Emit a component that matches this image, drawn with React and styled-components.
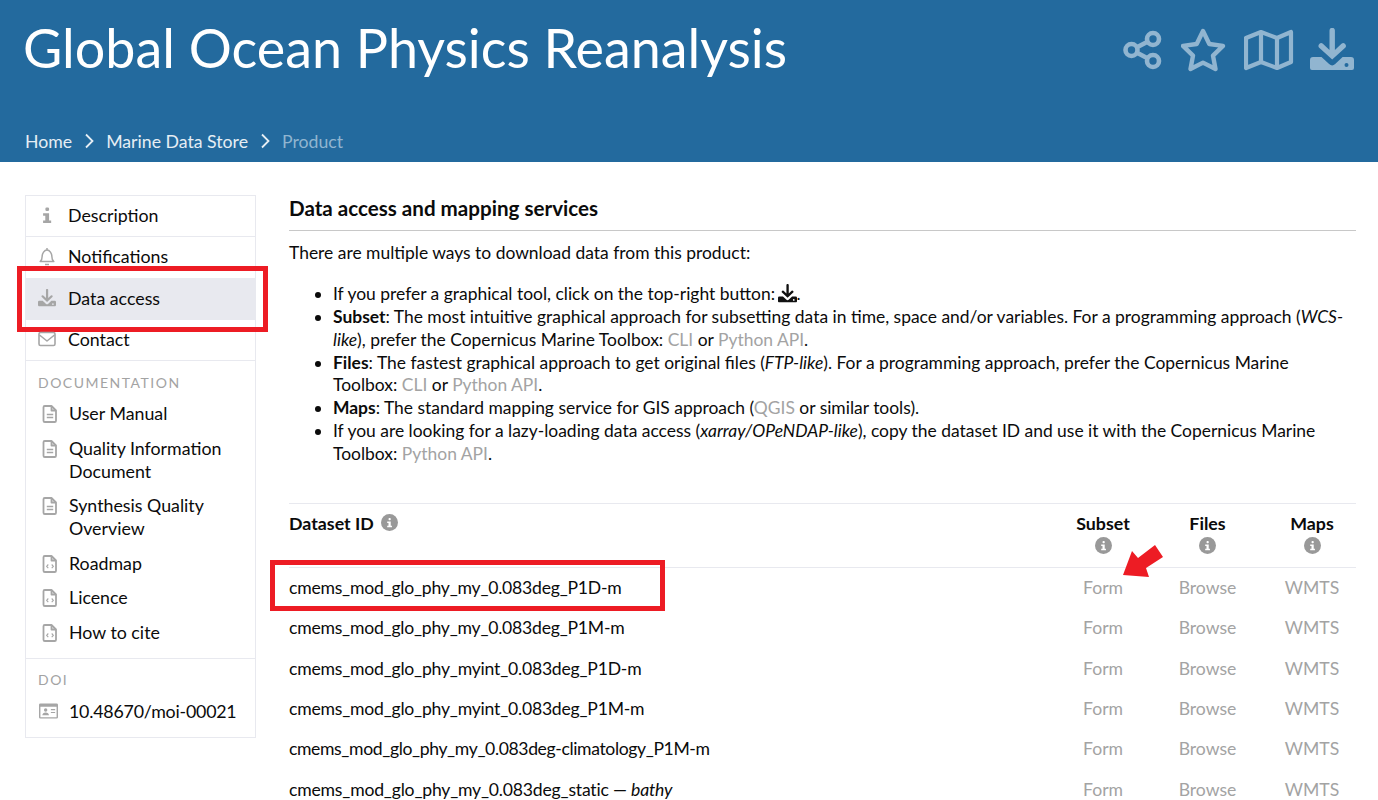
import styled, { createGlobalStyle } from 'styled-components'

const GlobalStyle = createGlobalStyle`
  html, body {
    margin: 0;
    padding: 0;
    height: 800px;
    overflow: hidden;
    background: #fff;
    font-family: Lato, "Open Sans", sans-serif;
    color: #0b0b0b;
  }
  * { box-sizing: border-box; }
`

const Svg = styled.svg`
  display: block;
  flex: none;
`

const ShareIcon = () => (
  <Svg width="42" height="44" viewBox="0 0 42 44" fill="none" stroke="currentColor" strokeWidth="4.6">
    <circle cx="8.500" cy="22" r="6" />
    <circle cx="30" cy="11" r="6" />
    <circle cx="30" cy="33" r="6" />
    <path d="M14 19.200 24.500 13.800M14 24.800 24.500 30.200" />
  </Svg>
)

const StarIcon = () => (
  <Svg width="47" height="44" viewBox="0 0 47 44" fill="none" stroke="currentColor" strokeWidth="4.400" strokeLinejoin="round">
    <path d="M22 3 28.300 16 42 17.900 32 27.600 34.500 41 22 34.600 9.500 41 12 27.600 2 17.900 15.700 16Z" />
  </Svg>
)

const MapIcon = () => (
  <Svg width="50" height="50" viewBox="0 0 50 50" fill="none" stroke="currentColor" strokeWidth="4.200" strokeLinejoin="round">
    <path d="M2 13 17 7 33 13 47 7V37L33 43 17 37 2 43Z" />
    <path d="M17 7V37M33 13V43" />
  </Svg>
)

const DownloadIcon = ({ size = 44 }) => (
  <Svg width={size} height={size} viewBox="0 1 44 44" fill="currentColor">
    <path d="M19.500 3.500a2.700 2.700 0 0 1 5.400 0V23l6.600-6.200a2.700 2.700 0 0 1 3.700 3.900L22.200 32.600 9.200 20.700a2.700 2.700 0 0 1 3.700-3.900l6.600 6.200Z" />
    <path fillRule="evenodd" d="M3 30h8.500l7.600 7a4.400 4.400 0 0 0 6.100 0l7.400-7H41a3 3 0 0 1 3 3v8a2 2 0 0 1-2 2H2a2 2 0 0 1-2-2v-8a3 3 0 0 1 3-3Zm33.500 6a2 2 0 1 0 0 4 2 2 0 0 0 0-4Z" />
  </Svg>
)

const InfoGlyph = ({ size = 18 }) => (
  <Svg width={size} height={size} viewBox="0 0 18 18" fill="currentColor">
    <rect x="7.700" y="2.800" width="3" height="3" rx="1" />
    <path d="M5.800 7.600h4.900v6h1.700v2H5.800v-2h1.800v-4H5.800Z" />
  </Svg>
)

const BellIcon = () => (
  <Svg width="18" height="19" viewBox="0 0 18 19" fill="none" stroke="currentColor" strokeWidth="1.500" strokeLinejoin="round">
    <path d="M9 1v2M2.200 14.500c1.700-1.500 2-3 2-5.500S6.200 3 9 3s4.800 3.500 4.800 6 .3 4 2 5.500ZM7 17.500h4" />
  </Svg>
)

const MailIcon = () => (
  <Svg width="18" height="18" viewBox="0 0 18 18" fill="none" stroke="currentColor" strokeWidth="1.600" strokeLinejoin="round">
    <rect x="1" y="2.500" width="16" height="13" rx="1.500" />
    <path d="M1.500 5 9 11l7.500-6" />
  </Svg>
)

const FileTextIcon = () => (
  <Svg width="16" height="18" viewBox="0 0 16 18" fill="none" stroke="currentColor" strokeWidth="1.800" strokeLinejoin="round">
    <path d="M2.800 1h6.700L14 5.500v10.200a1.300 1.300 0 0 1-1.300 1.300H2.800a1.300 1.300 0 0 1-1.300-1.300V2.300A1.300 1.300 0 0 1 2.800 1Z" />
    <path d="M9.500 1v4.500H14" />
    <path strokeWidth="1.300" d="M4.800 9.500h6.400M4.800 12.500h6.400" />
  </Svg>
)

const FileCodeIcon = () => (
  <Svg width="16" height="18" viewBox="0 0 16 18" fill="none" stroke="currentColor" strokeWidth="1.800" strokeLinejoin="round">
    <path d="M2.800 1h6.700L14 5.500v10.200a1.300 1.300 0 0 1-1.300 1.300H2.800a1.300 1.300 0 0 1-1.300-1.300V2.300A1.300 1.300 0 0 1 2.800 1Z" />
    <path d="M9.500 1v4.500H14" />
    <path strokeWidth="1.100" d="M6.300 9.500 4.600 11.300l1.700 1.800M9.700 9.500l1.700 1.800-1.700 1.800" />
  </Svg>
)

const IdCardIcon = () => (
  <Svg width="19" height="16" viewBox="0 0 20 16" fill="currentColor">
    <path fillRule="evenodd" d="M1.500 0h17A1.500 1.500 0 0 1 20 1.500v13a1.500 1.500 0 0 1-1.500 1.500h-17A1.500 1.500 0 0 1 0 14.500v-13A1.500 1.500 0 0 1 1.500 0ZM1.500 3.500v11h17v-11ZM7 5.200a1.800 1.800 0 1 0 0 3.600 1.800 1.800 0 0 0 0-3.600ZM3.500 12.500c0-1.800 1.500-3 3.500-3s3.500 1.200 3.500 3ZM12.500 6h4.500v1.200h-4.500ZM12.500 9h4.500v1.200h-4.500Z" />
  </Svg>
)

const Header = styled.header`
  height: 162px;
  background: #236a9e;
  padding: 0 24px 0 23px;
  display: flex;
  flex-direction: column;
  justify-content: space-between;
  color: #fff;
`

const HeaderTop = styled.div`
  display: flex;
  justify-content: space-between;
  align-items: flex-start;
`

const Title = styled.h1`
  margin: 11px 0 0;
  font-size: 53.850px;
  line-height: 72px;
  font-weight: 400;
`

const HeaderActions = styled.div`
  display: flex;
  align-items: center;
  margin-top: 25px;
  color: #91b5d0;
  gap: 16px;
`

const Breadcrumb = styled.nav`
  display: flex;
  align-items: center;
  height: 40px;
  padding: 0 0 2px 2px;
  font-size: 17.700px;
  color: #e6eef4;
`

const Crumb = styled.span`
  color: ${p => (p.$muted ? '#91b5d0' : '#e6eef4')};
`

const CrumbSep = styled.svg`
  width: 12px;
  height: 16px;
  margin: 0 11px;
`

const Page = styled.div`
  display: flex;
  align-items: flex-start;
  padding: 33px 22px 0 25px;
  gap: 33px;
`

const Sidebar = styled.aside`
  flex: none;
  width: 231px;
  height: 543px;
  border: 1px solid #e8e9ef;
`

const SideRow = styled.div`
  position: relative;
  display: flex;
  align-items: center;
  height: ${p => p.$h || 41}px;
  padding: 0 0 2px 12px;
  gap: 12px;
  font-size: 17.800px;
  background: ${p => (p.$active ? '#e8e9ef' : 'transparent')};
  border-bottom: ${p => (p.$active ? 'none' : `1px solid ${p.$line ? '#e8e9ef' : 'transparent'}`)};
`

const IconSlot = styled.span`
  width: 18px;
  display: flex;
  justify-content: center;
  color: #a6a6a6;
`

const RedBox = styled.div`
  position: absolute;
  border: 5px solid #ed1c24;
  top: -12px;
  bottom: -12px;
  left: -9px;
  right: -13px;
  pointer-events: none;
`

const SideGroup = styled.div`
  padding: ${p => p.$pad || '10px 12px 0'};
  border-bottom: ${p => (p.$line ? '1px solid #e8e9ef' : 'none')};
`

const SideLabel = styled.div`
  font-size: 14px;
  line-height: 22px;
  letter-spacing: 1.500px;
  color: #a3a3a3;
  margin-bottom: ${p => p.$gap || 8}px;
`

const DocItem = styled.div`
  display: flex;
  gap: 11px;
  font-size: 17.800px;
  line-height: 23px;
  margin-bottom: 11.600px;
  padding-left: 4px;
  svg { color: #a6a6a6; margin-top: 3px; }
`

const DoiItem = styled.div`
  display: flex;
  align-items: center;
  gap: 11px;
  padding-left: 1px;
  font-size: 17.800px;
  line-height: 23px;
  white-space: nowrap;
  letter-spacing: -0.200px;
  svg { color: #a6a6a6; }
`

const Main = styled.main`
  flex: 1;
  min-width: 0;
`

const SectionTitle = styled.h2`
  margin: 0;
  padding-bottom: 9px;
  font-size: 20.600px;
  line-height: 26px;
  font-weight: 700;
  border-bottom: 1px solid #c8c8c8;
`

const Intro = styled.p`
  margin: 10px 0 0;
  font-size: 17.450px;
  line-height: 23px;
`

const Bullets = styled.ul`
  margin: 19px 0 0;
  padding-left: 44px;
  font-size: 17.450px;
  line-height: 22.860px;
`

const Gray = styled.a`
  color: #a3a3a3;
`

const InlineIcon = styled.span`
  display: inline-block;
  vertical-align: -3px;
  margin-left: -2px;
  color: #111;
`

const Grid = styled.div`
  display: grid;
  grid-template-columns: 1fr 88px 121px 88px;
  margin-top: 37px;
  border-top: 1px solid #e8e9ef;
  font-size: 17.600px;
`

const HeadCell = styled.div`
  height: 64px;
  padding-top: 7px;
  font-weight: 700;
  font-size: 17.800px;
  border-bottom: 1px solid #e8e9ef;
  display: flex;
  flex-direction: ${p => (p.$center ? 'column' : 'row')};
  align-items: ${p => (p.$center ? 'center' : 'flex-start')};
  gap: ${p => (p.$center ? 2 : 7)}px;
  line-height: 24px;
`

const InfoDot = styled.span`
  width: 17px;
  height: 17px;
  margin-top: ${p => p.$mt || 0}px;
  border-radius: 50%;
  background: #999;
  color: #fff;
  display: flex;
  align-items: center;
  justify-content: center;
`

const Cell = styled.div`
  position: relative;
  height: 40.400px;
  padding-bottom: 1.400px;
  display: flex;
  align-items: center;
  justify-content: ${p => (p.$center ? 'center' : 'flex-start')};
  color: ${p => (p.$center ? '#a3a3a3' : '#0b0b0b')};
`

const DatasetId = styled.span`
  letter-spacing: ${p => p.$track}px;
`

const DatasetBox = styled.div`
  position: absolute;
  top: -8px;
  bottom: -3px;
  left: -19px;
  width: 395px;
  border: 5px solid #ed1c24;
  pointer-events: none;
`

const ArrowMark = styled.svg`
  position: absolute;
  left: 63px;
  top: -27px;
  width: 44px;
  height: 38px;
`

const datasets = [
  { id: 'cmems_mod_glo_phy_my_0.083deg_P1D-m', track: -0.23 },
  { id: 'cmems_mod_glo_phy_my_0.083deg_P1M-m', track: -0.23 },
  { id: 'cmems_mod_glo_phy_myint_0.083deg_P1D-m', track: -0.22 },
  { id: 'cmems_mod_glo_phy_myint_0.083deg_P1M-m', track: -0.22 },
  { id: 'cmems_mod_glo_phy_my_0.083deg-climatology_P1M-m', track: -0.38 },
  { id: 'cmems_mod_glo_phy_my_0.083deg_static', extra: 'bathy', track: -0.2 },
]

const Chevron = () => (
  <CrumbSep viewBox="0 0 12 16" fill="none" stroke="currentColor" strokeWidth="1.800">
    <path d="M3 1.500 9.500 8 3 14.500" />
  </CrumbSep>
)

export default function App() {
  return (
    <>
      <GlobalStyle />
      <Header>
        <HeaderTop>
          <Title>Global Ocean Physics Reanalysis</Title>
          <HeaderActions>
            <ShareIcon />
            <StarIcon />
            <MapIcon />
            <DownloadIcon />
          </HeaderActions>
        </HeaderTop>
        <Breadcrumb>
          <Crumb>Home</Crumb>
          <Chevron />
          <Crumb>Marine Data Store</Crumb>
          <Chevron />
          <Crumb $muted>Product</Crumb>
        </Breadcrumb>
      </Header>

      <Page>
        <Sidebar>
          <SideRow $h={41} $line><IconSlot><InfoGlyph size={22} /></IconSlot>Description</SideRow>
          <SideRow $h={41}><IconSlot><BellIcon /></IconSlot>Notifications</SideRow>
          <SideRow $h={42} $active>
            <IconSlot><DownloadIcon size={18} /></IconSlot>Data access
            <RedBox />
          </SideRow>
          <SideRow $h={41} $line><IconSlot><MailIcon /></IconSlot>Contact</SideRow>
          <SideGroup $line $pad="11px 12px 2px">
            <SideLabel>DOCUMENTATION</SideLabel>
            <DocItem><FileTextIcon /><span>User Manual</span></DocItem>
            <DocItem><FileTextIcon /><span>Quality Information<br />Document</span></DocItem>
            <DocItem><FileTextIcon /><span>Synthesis Quality<br />Overview</span></DocItem>
            <DocItem><FileCodeIcon /><span>Roadmap</span></DocItem>
            <DocItem><FileCodeIcon /><span>Licence</span></DocItem>
            <DocItem><FileCodeIcon /><span>How to cite</span></DocItem>
          </SideGroup>
          <SideGroup>
            <SideLabel $gap={9}>DOI</SideLabel>
            <DoiItem><IdCardIcon /><span>10.48670/moi-00021</span></DoiItem>
          </SideGroup>
        </Sidebar>

        <Main>
          <SectionTitle>Data access and mapping services</SectionTitle>
          <Intro>There are multiple ways to download data from this product:</Intro>
          <Bullets>
            <li>If you prefer a graphical tool, click on the top-right button: <InlineIcon><DownloadIcon size={19} /></InlineIcon>.</li>
            <li><b>Subset</b>: The most intuitive graphical approach for subsetting data in time, space and/or variables. For a programming approach (<i>WCS-like</i>), prefer the Copernicus Marine Toolbox: <Gray>CLI</Gray> or <Gray>Python API</Gray>.</li>
            <li><b>Files</b>: The fastest graphical approach to get original files (<i>FTP-like</i>). For a programming approach, prefer the Copernicus Marine Toolbox: <Gray>CLI</Gray> or <Gray>Python API</Gray>.</li>
            <li><b>Maps</b>: The standard mapping service for GIS approach (<Gray>QGIS</Gray> or similar tools).</li>
            <li>If you are looking for a lazy-loading data access (<i>xarray/OPeNDAP-like</i>), copy the dataset ID and use it with the Copernicus Marine Toolbox: <Gray>Python API</Gray>.</li>
          </Bullets>

          <Grid>
            <HeadCell>Dataset ID <InfoDot $mt={3}><InfoGlyph size={13} /></InfoDot></HeadCell>
            <HeadCell $center>Subset<InfoDot><InfoGlyph size={13} /></InfoDot></HeadCell>
            <HeadCell $center>Files<InfoDot><InfoGlyph size={13} /></InfoDot></HeadCell>
            <HeadCell $center>Maps<InfoDot><InfoGlyph size={13} /></InfoDot></HeadCell>
            {datasets.map(({ id, extra, track }, i) => [
              <Cell key={id + 'a'}>
                <DatasetId $track={track}>{id}{extra && <> — <i>{extra}</i></>}</DatasetId>
                {i === 0 && <DatasetBox />}
              </Cell>,
              <Cell key={id + 'b'} $center>
                Form
                {i === 0 && (
                  <ArrowMark viewBox="0 0 44 38">
                    <path fill="#ed1c24" d="M1 34 10 10 16 17 33 4 41 16 24 27 27 36Z" />
                  </ArrowMark>
                )}
              </Cell>,
              <Cell key={id + 'c'} $center>Browse</Cell>,
              <Cell key={id + 'd'} $center>WMTS</Cell>,
            ])}
          </Grid>
        </Main>
      </Page>
    </>
  )
}
